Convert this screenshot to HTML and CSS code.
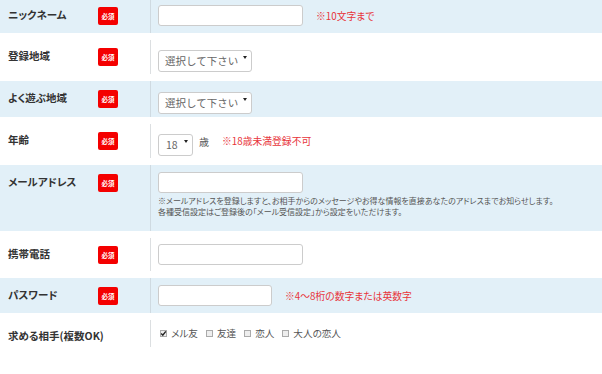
FILE: index.html
```html
<!DOCTYPE html>
<html lang="ja">
<head>
    <meta charset="UTF-8">
    <title>会員登録</title>
    <link rel="stylesheet" href="styles.css">
</head>
<body>
    <div class="form">
        <!-- ニックネーム -->
        <div class="row alt first">
            <div class="label"><span class="name">ニックネーム</span><span class="req">必須</span></div>
            <div class="field">
                <input class="text" type="text">
                <span class="note">※10文字まで</span>
            </div>
        </div>

        <div class="row">
            <div class="label"><span class="name">登録地域</span><span class="req">必須</span></div>
            <div class="field">
                <span class="select wide">
                    <select><option>選択して下さい</option></select>
                </span>
            </div>
        </div>

        <div class="row alt">
            <div class="label"><span class="name">よく遊ぶ地域</span><span class="req">必須</span></div>
            <div class="field">
                <span class="select wide">
                    <select><option>選択して下さい</option></select>
                </span>
            </div>
        </div>

        <div class="row">
            <div class="label"><span class="name">年齢</span><span class="req">必須</span></div>
            <div class="field">
                <span class="select age">
                    <select><option>18</option></select>
                </span>
                <span class="unit">歳</span>
                <span class="note">※18歳未満登録不可</span>
            </div>
        </div>

        <!-- メールアドレス -->
        <div class="row alt">
            <div class="label"><span class="name">メールアドレス</span><span class="req">必須</span></div>
            <div class="field stack">
                <input class="text" type="text">
                <p class="desc">※メールアドレスを登録しますと、お相手からのメッセージやお得な情報を直接あなたのアドレスまでお知らせします。<br>各種受信設定はご登録後の「メール受信設定」から設定をいただけます。</p>
            </div>
        </div>

        <div class="row">
            <div class="label"><span class="name">携帯電話</span><span class="req">必須</span></div>
            <div class="field">
                <input class="text" type="text">
            </div>
        </div>

        <div class="row alt">
            <div class="label"><span class="name">パスワード</span><span class="req">必須</span></div>
            <div class="field">
                <input class="text short" type="password">
                <span class="note">※4〜8桁の数字または英数字</span>
            </div>
        </div>

        <!-- 求める相手 -->
        <div class="row">
            <div class="label"><span class="name">求める相手(複数OK)</span></div>
            <div class="field checks">
                <label class="check"><span class="box on"><svg width="7" height="7" viewBox="0 0 7 7"><path d="M1.2 3.6 L2.8 5.2 L5.8 1.4" fill="none" stroke="#222" stroke-width="1.4"/></svg></span>メル友</label>
                <label class="check"><span class="box"></span>友達</label>
                <label class="check"><span class="box"></span>恋人</label>
                <label class="check"><span class="box"></span>大人の恋人</label>
            </div>
        </div>
    </div>
</body>
</html>
```

FILE: styles.css
```css
/* Global */
body {
    margin: 0;
    font-family: "Noto Sans CJK JP", "Noto Sans", sans-serif;
    font-feature-settings: "palt";
    color: #333;
    background: #fff;
}

.form {
    width: 602px;
}

/* Rows */
.row {
    display: flex;
    padding: 7px 0;
}

.row.alt {
    background: #e2f0f8;
    padding: 0;
}

.label {
    width: 150px;
    box-sizing: border-box;
    padding: 7px 0 0 8px;
    display: flex;
    align-items: flex-start;
}

.row.alt .label {
    padding-top: 8px;
}

.row.first .label {
    padding-top: 6px;
}

.name {
    width: 90px;
    font-size: 10.5px;
    font-weight: bold;
    line-height: 18px;
    color: #333;
    white-space: nowrap;
}

.req {
    margin-top: 1px;
    width: 20px;
    height: 18px;
    background: #f40000;
    border-radius: 2px;
    color: #fff;
    font-size: 6.5px;
    font-weight: bold;
    text-align: center;
    line-height: 18px;
}

.field {
    flex: 1;
    border-left: 1px solid #dcdfe1;
    padding: 6px 0 6px 7px;
    display: flex;
    align-items: center;
}

.row.alt .field {
    border-left-color: #cfdae1;
    padding: 7px 0 7px 7px;
}

.row.first .field {
    padding-top: 5px;
}

.field.stack {
    display: block;
}

/* Inputs */
.text {
    width: 145px;
    height: 21px;
    box-sizing: border-box;
    border: 1px solid #ccc;
    border-radius: 3px;
    background: #fff;
    margin: 0;
    display: block;
}

.text.short {
    width: 114px;
}

.select {
    position: relative;
    display: inline-block;
    height: 22px;
}

.select select {
    appearance: none;
    -webkit-appearance: none;
    height: 22px;
    box-sizing: border-box;
    border: 1px solid #ccc;
    border-radius: 3px;
    background: #fff;
    color: #666;
    font-family: inherit;
    font-size: 10.5px;
    padding: 0 0 0 6px;
    margin: 0;
}

.select.wide select {
    width: 94px;
}

.select.age select {
    width: 35px;
    padding-left: 7px;
}

.select::after {
    content: "";
    position: absolute;
    right: 5px;
    top: 10px;
    border-left: 2px solid transparent;
    border-right: 2px solid transparent;
    border-top: 3px solid #222;
}

.unit {
    margin-left: 6px;
    font-size: 10px;
    color: #555;
}

.note {
    margin-left: 13px;
    font-size: 9.8px;
    color: #e8343a;
}

.desc {
    margin: 2px 0 7px;
    font-size: 8px;
    line-height: 11px;
    color: #555;
}

/* Checkboxes */
.checks {
    padding-top: 7px;
    padding-bottom: 7px;
}

.check {
    display: inline-flex;
    align-items: center;
    margin-right: 6px;
    padding-left: 2px;
    font-size: 9.6px;
    line-height: 13px;
    color: #555;
}

.box {
    width: 7px;
    height: 7px;
    box-sizing: border-box;
    border: 1px solid #aaa;
    background: #eee;
    margin-right: 4px;
    position: relative;
}

.box svg {
    position: absolute;
    left: -1px;
    top: -1px;
}
```
